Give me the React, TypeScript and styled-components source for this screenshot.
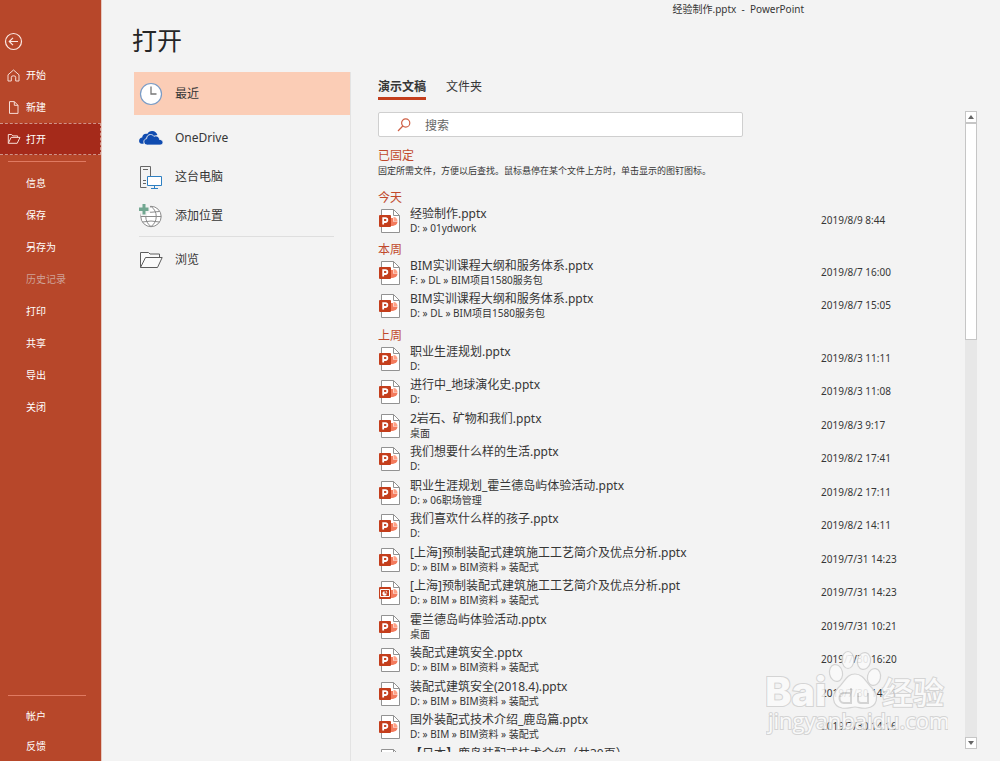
import React from 'react';
import styled, { createGlobalStyle, css } from 'styled-components';

const GlobalStyle = createGlobalStyle`
  *, *::before, *::after { box-sizing: border-box; }
  body {
    margin: 0;
    background: #f3f3f3;
    color: #363636;
    font-family: "Noto Sans", "Noto Sans CJK SC", sans-serif;
    font-size: 12px;
  }
  button, input { font: inherit; color: inherit; }
  ul { list-style: none; margin: 0; padding: 0; }
`;

const Window = styled.div`
  position: relative;
  display: flex;
  height: 100vh;
  overflow: hidden;
`;

const Sidebar = styled.nav`
  flex: none;
  display: flex;
  flex-direction: column;
  width: 102px;
  background: #b7472a;
  border-right: 1px solid #e6c9c1;
  color: #fff;
`;

const BackButton = styled.button`
  align-self: flex-start;
  display: flex;
  margin: 32px 0 8px 4px;
  padding: 0;
  border: 0;
  background: none;
`;

const SideItem = styled.button<{ $active?: boolean; $short?: boolean }>`
  display: flex;
  align-items: center;
  gap: 4px;
  height: ${p => (p.$short ? 30 : 32)}px;
  padding: 0 0 0 7px;
  border: 1px solid transparent;
  border-left: 0;
  background: none;
  font-size: 10px;
  line-height: 16px;
  text-align: left;
  ${p => p.$active && css`
    background: #a52a1a;
    border: 1px dashed #cf9489;
    border-left: 0;
  `}
  &:disabled { color: #cfa297; }
`;

const SideIcon = styled.span`
  display: flex;
  width: 15px;
`;

const SideRule = styled.hr`
  width: 78px;
  height: 1px;
  margin: 6px 8px 5px;
  border: 0;
  background: #e07a62;
`;

const SideFooter = styled.div`
  display: flex;
  flex-direction: column;
  margin-top: auto;
`;

const Page = styled.div`
  flex: 1;
  min-width: 0;
  display: flex;
  flex-direction: column;
`;

const TitleBar = styled.header`
  display: flex;
  justify-content: flex-end;
  padding: 1px 196px 1px 0;
  font-size: 10px;
  line-height: 16px;
  white-space: pre;
`;

const Heading = styled.h1`
  margin: 5px 0 14px 30px;
  font-size: 25px;
  font-weight: 400;
  line-height: 35px;
  color: #262626;
`;

const Columns = styled.div`
  flex: 1;
  display: flex;
  min-height: 0;
`;

const Places = styled.div`
  flex: none;
  width: 249px;
  padding-left: 32px;
  border-right: 1px solid #e3e3e3;
`;

const Place = styled.button<{ $active?: boolean }>`
  display: flex;
  align-items: center;
  gap: 12px;
  width: 100%;
  height: 39px;
  padding: 0 0 0 5px;
  border: 0;
  background: none;
  line-height: 18px;
  text-align: left;
  ${p => p.$active && css`
    height: 43px;
    margin-bottom: 3px;
    background: #fbcdb6;
  `}
`;

const PlaceRule = styled.hr`
  height: 1px;
  margin: 1px 16px 3px 5px;
  border: 0;
  background: #dedede;
`;

const Files = styled.main`
  flex: 1;
  min-width: 0;
  display: flex;
  flex-direction: column;
  padding: 5px 0 9px 27px;
`;

const Tabs = styled.div`
  display: flex;
  gap: 20px;
  margin-bottom: 12px;
`;

const Tab = styled.button<{ $active?: boolean }>`
  height: 23px;
  padding: 1px 0;
  border: 0;
  border-bottom: 3px solid ${p => (p.$active ? '#c43e1c' : 'transparent')};
  background: none;
  font-weight: ${p => (p.$active ? 700 : 400)};
  line-height: 18px;
`;

const SearchBox = styled.label`
  flex: none;
  display: flex;
  align-items: center;
  gap: 14px;
  width: 365px;
  height: 25px;
  padding-left: 18px;
  border: 1px solid #cfcfcf;
  border-radius: 2px;
  background: #fff;
`;

const SearchInput = styled.input`
  flex: 1;
  padding: 2px 0 0;
  border: 0;
  outline: 0;
  background: none;
  line-height: 16px;
  &::placeholder { color: #666; opacity: 1; }
`;

const List = styled.div`
  flex: 1;
  min-height: 0;
  margin-right: 35px;
  padding-top: 8px;
  overflow: hidden;
`;

const GroupTitle = styled.h2`
  margin: 3px 0 0;
  font-size: 12px;
  font-weight: 400;
  line-height: 16px;
  color: #c1492c;
`;

const Hint = styled.p`
  margin: 0 0 12px;
  font-size: 9px;
  line-height: 14px;
  white-space: nowrap;
`;

const FileItem = styled.li`
  &:nth-child(even) { padding-bottom: 1px; }
`;

const FileRow = styled.button`
  display: grid;
  grid-template-columns: 32px 1fr 144px;
  align-items: center;
  width: 100%;
  height: 33px;
  padding: 0 0 5px;
  border: 0;
  background: none;
  text-align: left;
  white-space: nowrap;
`;

const FileIconBox = styled.span`
  display: flex;
  padding-top: 2px;
`;

const FileText = styled.span`
  display: flex;
  flex-direction: column;
  min-width: 0;
`;

const FileName = styled.span`
  line-height: 16px;
`;

const FilePath = styled.span`
  min-height: 12px;
  font-size: 10px;
  line-height: 12px;
`;

const FileDate = styled.time`
  font-size: 10px;
  line-height: 14px;
`;

const ScrollBar = styled.div`
  position: absolute;
  top: 111px;
  right: 23px;
  bottom: 12px;
  display: flex;
  flex-direction: column;
  width: 12px;
  background: #e7e7e7;
`;

const ScrollButton = styled.button`
  flex: none;
  display: flex;
  align-items: center;
  justify-content: center;
  height: 12px;
  padding: 0;
  border: 1px solid #c6c6c6;
  background: #fff;
`;

const ScrollThumb = styled.div`
  flex: 0 0 34%;
  border: 1px solid #c6c6c6;
  background: #fff;
`;

const ScrollTrack = styled.div`
  flex: 1;
`;

const Watermark = styled.div`
  position: absolute;
  right: 52px;
  bottom: 16px;
  width: 182px;
  pointer-events: none;
`;

const HomeIcon = () => (
  <svg width="13" height="13" viewBox="0 0 13 13" fill="none" stroke="#f6dcd5">
    <path d="M1 5.8 6.5 1 12 5.8V12H8.7V8.2Q8.7 6.8 6.5 6.8T4.3 8.2V12H1Z" />
  </svg>
);

const NewIcon = () => (
  <svg width="13" height="13" viewBox="0 0 13 13" fill="none" stroke="#f6dcd5">
    <path d="M2.5.6H7.3L11 4.3V12.4H2.5ZM7.3.6V4.3H11" />
  </svg>
);

const OpenIcon = () => (
  <svg width="14" height="12" viewBox="0 0 14 12" fill="none" stroke="#f6dcd5">
    <path d="M1.3 10.3V1.5H4.6L5.8 2.9H10.6V4.4M1.3 10.3 4.1 4.4H13L10.2 10.3Z" />
  </svg>
);

const ClockIcon = () => (
  <svg width="24" height="24" viewBox="0 0 24 24" fill="none">
    <circle cx="12" cy="12" r="10.5" fill="#fff" stroke="#7a9cc6" strokeWidth="1.2" />
    <path d="M12 4.5V12H17.5" stroke="#777" strokeWidth="1.3" />
  </svg>
);

const CloudIcon = () => (
  <svg width="24" height="16" viewBox="0 0 24 16">
    <path d="M4.3 13.8C.6 14 .1 12.4 .1 10.8C.1 9 1.5 7.7 3.2 7.6C3.3 5 5.6 3.3 8.2 4C9.3 1.8 11.2 .8 13.3 .9C15.9 1 17.8 2.6 18.4 5L10 9Z" fill="#0f4bb0" />
    <path d="M8.3 15.1C6.2 15.1 4.8 13.7 4.8 11.8C4.8 10.1 6 8.9 7.6 8.7C7.6 6.2 9.3 4.5 11.5 4.5C13 4.5 14.2 5.2 14.9 6.3C17.6 5.1 20.3 6.6 20.5 9.4C22.5 9.4 24 10.6 24 12.3C24 13.9 22.8 15.1 21.1 15.1Z" fill="#0f4bb0" stroke="#f3f3f3" strokeWidth="0.9" />
  </svg>
);

const ComputerIcon = () => (
  <svg width="24" height="24" viewBox="0 0 24 24" fill="none">
    <path d="M7.5 22.5H1.5V1.5H11.5V11M4 4.5H9M4 15.5H7M4 18.5H7" stroke="#666" />
    <path d="M8.5 11.5H22.5V20.5H8.5ZM15.5 20.5V23M12 23.5H19" fill="#fff" stroke="#2e80c3" />
  </svg>
);

const GlobeIcon = () => (
  <svg width="24" height="24" viewBox="0 0 24 24" fill="none">
    <circle cx="12" cy="12.500" r="10.200" fill="#fff" stroke="#8b8b8b" />
    <path d="M1.800 12.500H22.200M3.500 7.500Q12 9 20.500 7.500M3.500 18Q12 16 20.500 18M12 2.500C5 7 5 18 12 22.500M12 2.500C19 7 19 18 12 22.500" stroke="#8b8b8b" />
    <path d="M0 2H2V0H8V2H11V9H8V12H2V9H0Z" fill="#f3f3f3" />
    <path d="M0 3.500H3.500V0H6.500V3.500H9.500V7H6.500V10.500H3.500V7H0Z" fill="#72a791" />
  </svg>
);

const FolderIcon = () => (
  <svg width="24" height="18" viewBox="0 0 24 18" fill="#fafafa" stroke="#5c5c5c">
    <path d="M1.5 16.5V1.5H9.5L11 3H20.5V6.5" />
    <path d="M1.5 16.5 6.5 6.5H23.2L18.5 16.5Z" />
  </svg>
);

const SearchIcon = () => (
  <svg width="14" height="14" viewBox="0 0 14 14" fill="none" stroke="#cf5f45" strokeWidth="1.2">
    <circle cx="8.7" cy="5" r="4.1" />
    <path d="M5.8 8 1 13" />
  </svg>
);

const FileIcon = ({ legacy }: { legacy?: boolean }) => (
  <svg width="24" height="24" viewBox="0 0 24 24" fill="none">
    <path d="M3.5 .5H15.500L21.500 6.500V23.500H3.500Z" fill="#fff" stroke="#929292" />
    <path d="M15.500 .5V6.500H21.500" stroke="#929292" />
    <path d="M15.500 8C18 8 19.500 10 19.500 12H15.500Z" fill="#ffa287" />
    <path d="M13 9V17C17 17 19.500 15.500 19.500 12.500H15V9Z" fill="#f37a5c" />
    <rect x="1" y="6" width="12" height="12" rx="1" fill="#c43e1c" />
    {legacy ? (
      <>
        <path d="M2.500 8.500H11.500V15.500H2.500Z" stroke="#fff" />
        <path d="M6.600 10.300A2.200 2.200 0 1 0 8.800 12.500H6.600Z" fill="#fff" />
        <path d="M7.800 9.600V11.400H9.600Z" fill="#fff" />
      </>
    ) : (
      <path d="M5.200 15.500V9.200H7.400C10 9.200 10 13 7.400 13H5.200" stroke="#fff" strokeWidth="1.800" />
    )}
  </svg>
);

const PawMark = () => (
  <svg width="182" height="96" viewBox="0 0 182 96" fill="#fafafa" stroke="#d0d0d0" strokeWidth="1.2" opacity="0.88">
    <g fontFamily="Inter, 'Noto Sans CJK SC', sans-serif" paintOrder="stroke">
      <text x="-1" y="61" fontSize="40" fontWeight="800" strokeWidth="2">Bai</text>
      <text x="116" y="59" fontSize="31" fontWeight="500" strokeWidth="2">经验</text>
    </g>
    <g transform="translate(2 3)">
      <ellipse cx="68" cy="25" rx="6.5" ry="8.5" transform="rotate(-12 68 25)" />
      <ellipse cx="80" cy="12" rx="6" ry="8.5" />
      <ellipse cx="96" cy="13" rx="6.5" ry="8.5" transform="rotate(12 96 13)" />
      <ellipse cx="106" cy="29" rx="6.5" ry="8.5" transform="rotate(12 106 29)" />
      <path d="M87 26C95 26 98 34 104 40C112 48 109 59 99 60C93 61 91 59 87 59S80 61 74 60C64 58 63 47 70 40C77 34 78 26 87 26Z" />
      <path d="M83 40V55H76C70 55 70 45 76 45H83M90 45V52Q90 55 93 55H100V45" fill="none" strokeWidth="2" />
    </g>
    <text x="2" y="84" fontFamily="'Open Sans', 'Noto Sans', sans-serif" fontSize="22" paintOrder="stroke" strokeWidth="2">jingyanbaidu.com</text>
  </svg>
);

type FileEntry = { name: string; path: string; date: string; legacy?: boolean };

const bimPath = 'D: » BIM » BIM资料 » 装配式';

const groups: { title: string; files: FileEntry[] }[] = [
  { title: '今天', files: [{ name: '经验制作.pptx', path: 'D: » 01ydwork', date: '2019/8/9 8:44' }] },
  {
    title: '本周',
    files: [
      { name: 'BIM实训课程大纲和服务体系.pptx', path: 'F: » DL » BIM项目1580服务包', date: '2019/8/7 16:00' },
      { name: 'BIM实训课程大纲和服务体系.pptx', path: 'D: » DL » BIM项目1580服务包', date: '2019/8/7 15:05' },
    ],
  },
  {
    title: '上周',
    files: [
      { name: '职业生涯规划.pptx', path: 'D:', date: '2019/8/3 11:11' },
      { name: '进行中_地球演化史.pptx', path: 'D:', date: '2019/8/3 11:08' },
      { name: '2岩石、矿物和我们.pptx', path: '桌面', date: '2019/8/3 9:17' },
      { name: '我们想要什么样的生活.pptx', path: 'D:', date: '2019/8/2 17:41' },
      { name: '职业生涯规划_霍兰德岛屿体验活动.pptx', path: 'D: » 06职场管理', date: '2019/8/2 17:11' },
      { name: '我们喜欢什么样的孩子.pptx', path: 'D:', date: '2019/8/2 14:11' },
      { name: '[上海]预制装配式建筑施工工艺简介及优点分析.pptx', path: bimPath, date: '2019/7/31 14:23' },
      { name: '[上海]预制装配式建筑施工工艺简介及优点分析.ppt', path: bimPath, date: '2019/7/31 14:23', legacy: true },
      { name: '霍兰德岛屿体验活动.pptx', path: '桌面', date: '2019/7/31 10:21' },
      { name: '装配式建筑安全.pptx', path: bimPath, date: '2019/7/30 16:20' },
      { name: '装配式建筑安全(2018.4).pptx', path: bimPath, date: '2019/7/30 14:21' },
      { name: '国外装配式技术介绍_鹿岛篇.pptx', path: bimPath, date: '2019/7/30 14:16' },
      { name: '【日本】鹿岛装配式技术介绍（共30页）', path: '', date: '' },
    ],
  },
];

const primaryItems = [
  { label: '开始', icon: <HomeIcon /> },
  { label: '新建', icon: <NewIcon /> },
  { label: '打开', icon: <OpenIcon />, active: true },
];

const fileItems = ['信息', '保存', '另存为', '历史记录', '打印', '共享', '导出', '关闭'];

export default function App() {
  return (
    <Window>
      <GlobalStyle />
      <Sidebar>
        <BackButton aria-label="返回">
          <svg width="19" height="19" viewBox="0 0 19 19" fill="none" stroke="#fbe9e4" strokeWidth="1.2">
            <circle cx="9.5" cy="9.5" r="8" />
            <path d="M14 9.5H5.5M9 5.8 5.3 9.5 9 13.2" />
          </svg>
        </BackButton>
        {primaryItems.map(item => (
          <SideItem key={item.label} $active={item.active}>
            <SideIcon>{item.icon}</SideIcon>
            {item.label}
          </SideItem>
        ))}
        <SideRule />
        {fileItems.map(label => (
          <SideItem key={label} disabled={label === '历史记录'}>
            <SideIcon />
            {label}
          </SideItem>
        ))}
        <SideFooter>
          <SideRule />
          {['帐户', '反馈'].map(label => (
            <SideItem key={label} $short>
              <SideIcon />
              {label}
            </SideItem>
          ))}
        </SideFooter>
      </Sidebar>
      <Page>
        <TitleBar>{'经验制作.pptx  -  PowerPoint'}</TitleBar>
        <Heading>打开</Heading>
        <Columns>
          <Places>
            <Place $active><ClockIcon />最近</Place>
            <Place><CloudIcon />OneDrive</Place>
            <Place><ComputerIcon />这台电脑</Place>
            <Place><GlobeIcon />添加位置</Place>
            <PlaceRule />
            <Place><FolderIcon />浏览</Place>
          </Places>
          <Files>
            <Tabs>
              <Tab $active>演示文稿</Tab>
              <Tab>文件夹</Tab>
            </Tabs>
            <SearchBox>
              <SearchIcon />
              <SearchInput type="text" placeholder="搜索" aria-label="搜索" />
            </SearchBox>
            <List>
              <GroupTitle>已固定</GroupTitle>
              <Hint>固定所需文件，方便以后查找。鼠标悬停在某个文件上方时，单击显示的图钉图标。</Hint>
              {groups.map(group => (
                <section key={group.title}>
                  <GroupTitle>{group.title}</GroupTitle>
                  <ul>
                    {group.files.map((file, i) => (
                      <FileItem key={i}>
                        <FileRow>
                          <FileIconBox><FileIcon legacy={file.legacy} /></FileIconBox>
                          <FileText>
                            <FileName>{file.name}</FileName>
                            <FilePath>{file.path}</FilePath>
                          </FileText>
                          <FileDate>{file.date}</FileDate>
                        </FileRow>
                      </FileItem>
                    ))}
                  </ul>
                </section>
              ))}
            </List>
          </Files>
        </Columns>
      </Page>
      <ScrollBar>
        <ScrollButton aria-label="向上滚动">
          <svg width="6" height="4" viewBox="0 0 6 4"><path d="M0 4 3 0 6 4Z" fill="#666" /></svg>
        </ScrollButton>
        <ScrollThumb />
        <ScrollTrack />
        <ScrollButton aria-label="向下滚动">
          <svg width="6" height="4" viewBox="0 0 6 4"><path d="M0 0H6L3 4Z" fill="#666" /></svg>
        </ScrollButton>
      </ScrollBar>
      <Watermark aria-hidden="true"><PawMark /></Watermark>
    </Window>
  );
}
